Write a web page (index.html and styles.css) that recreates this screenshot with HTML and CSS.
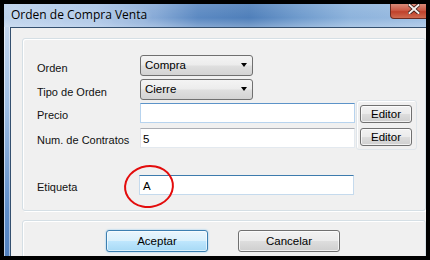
FILE: index.html
```html
<!DOCTYPE html>
<html lang="es">
<head>
    <meta charset="UTF-8">
    <title>Orden de Compra Venta</title>
    <link rel="stylesheet" href="styles.css">
</head>
<body>
    <div class="screen">
        <div class="window">
            <div class="titlebar">
                <span class="title">Orden de Compra Venta</span>
                <div class="close">
                    <svg width="12" height="10" viewBox="0 0 12 10">
                        <path d="M1.5 1 L10.5 9 M10.5 1 L1.5 9" stroke="#3a1a14" stroke-width="3.6" stroke-linecap="square"/>
                        <path d="M1.5 1 L10.5 9 M10.5 1 L1.5 9" stroke="#f4f0ee" stroke-width="2" stroke-linecap="square"/>
                    </svg>
                </div>
            </div>

            <div class="frame">
                <div class="frame_side"></div>
                <div class="client">

                    <div class="group fields">
                        <div class="row">
                            <label>Orden</label>
                            <div class="combo"><span>Compra</span><i class="arrow"></i></div>
                        </div>
                        <div class="row">
                            <label>Tipo de Orden</label>
                            <div class="combo"><span>Cierre</span><i class="arrow"></i></div>
                        </div>

                        <div class="edit_block">
                            <div class="edit_rows">
                                <div class="row row_edit">
                                    <label>Precio</label>
                                    <div class="input input_hover"></div>
                                </div>
                                <div class="row row_edit">
                                    <label>Num. de Contratos</label>
                                    <div class="input">5</div>
                                </div>
                            </div>
                            <div class="editor_box">
                                <button class="btn btn_small">Editor</button>
                                <button class="btn btn_small">Editor</button>
                            </div>
                        </div>

                        <div class="row row_tag">
                            <label>Etiqueta</label>
                            <div class="input input_focus">A<span class="mark"></span></div>
                        </div>
                    </div>

                    <div class="group actions">
                        <button class="btn btn_wide btn_default">Aceptar</button>
                        <button class="btn btn_wide">Cancelar</button>
                    </div>

                </div>
            </div>
        </div>
    </div>
</body>
</html>
```

FILE: styles.css
```css
body{
    margin: 0;
    background: #000;
}

.screen{
    width: 430px;
    height: 260px;
    padding: 4px;
    box-sizing: border-box;
}

.window{
    height: 252px;
    display: flex;
    flex-direction: column;
    overflow: hidden;
    font-family: "Liberation Sans", Arial, sans-serif;
    font-size: 11px;
    color: #000;
}

/* barra de titulo estilo aero */
.titlebar{
    height: 23px;
    flex-shrink: 0;
    display: flex;
    align-items: flex-start;
    padding-left: 7px;
    background:
        linear-gradient(180deg, rgba(255,255,255,0.10) 0%, rgba(255,255,255,0) 60%, rgba(255,255,255,0.25) 100%),
        linear-gradient(90deg, #bcd2ec 0%, #a9c4e6 22%, #86a9d6 36%, #5b89c2 46%, #4f7fba 58%, #6f9bcd 70%, #8db3dc 82%, #9cbde2 100%);
}

.title{
    font-family: "Open Sans", "Noto Sans", sans-serif;
    font-size: 12px;
    line-height: 16px;
    padding-top: 3px;
    color: #000;
    text-shadow: 0 0 6px rgba(255,255,255,0.7);
}

.close{
    flex-shrink: 0;
    margin-left: auto;
    margin-right: -7px;
    width: 43px;
    height: 15px;
    box-sizing: border-box;
    border: 1px solid #6b2a20;
    border-top: none;
    border-radius: 0 0 4px 4px;
    background: linear-gradient(180deg, #d98a78 0%, #cc5a45 45%, #c0412b 55%, #cf6a50 100%);
    display: flex;
    justify-content: center;
}

.close svg{
    display: block;
    margin-left: 4px;
}

.frame{
    flex: 1;
    display: flex;
}

.frame_side{
    width: 6px;
    flex-shrink: 0;
    background: linear-gradient(180deg, #c3d6ed 0%, #9ebde2 30%, #5d8cc8 70%, #4a78b6 100%);
    box-shadow: inset 1px 0 0 rgba(255,255,255,0.6), inset -1px 0 0 rgba(255,255,255,0.45);
}

.client{
    flex: 1;
    background: #f0f0f0;
    border-left: 1px solid #34506f;
    border-top: 1px solid #34506f;
    padding: 10px 0 0 11px;
}

/* group box */
.group{
    border: 1px solid #d5dfe5;
    border-radius: 3px;
    box-shadow: inset 1px 1px 0 #fff, 1px 1px 0 #fff;
}

.fields{
    padding: 16px 0 15px 14px;
}

.row{
    display: flex;
    align-items: flex-start;
    height: 24px;
}

.row label{
    width: 103px;
    flex-shrink: 0;
    line-height: 13px;
    padding-top: 7px;
    color: #111;
}

.combo{
    width: 113px;
    height: 21px;
    box-sizing: border-box;
    border: 1px solid #707070;
    border-radius: 3px;
    background: linear-gradient(180deg, #f4f4f4 0%, #ececec 48%, #dfdfdf 52%, #d3d3d3 100%);
    display: flex;
    align-items: center;
    padding: 0 5px 1px 4px;
    font-size: 11.5px;
}

.arrow{
    margin-left: auto;
    width: 0;
    height: 0;
    border-left: 3.5px solid transparent;
    border-right: 3.5px solid transparent;
    border-top: 4px solid #000;
}

.edit_block{
    display: flex;
    align-items: flex-start;
    height: 47px;
}

.row_edit{
    height: 25px;
}

.row_edit label{
    padding-top: 6px;
}

.input{
    width: 215px;
    height: 20px;
    box-sizing: border-box;
    background: #fff;
    border: 1px solid #e3e9ef;
    border-top-color: #abadb3;
    border-left-color: #e2e3ea;
    padding: 3px 2px 0 2px;
    font-size: 11.5px;
    line-height: 14px;
}

.input_hover{
    border-color: #b7d3ee;
    border-top-color: #5c93c8;
}

.input_focus{
    position: relative;
    margin-left: -1px;
    border-color: #c5daed;
    border-top-color: #3d7bad;
    padding-left: 3px;
}

.editor_box{
    margin-top: -3px;
    margin-left: 1px;
    width: 61px;
    height: 50px;
    box-sizing: border-box;
    border: 1px solid #dfe5ea;
    border-radius: 3px;
    box-shadow: inset 1px 1px 0 #fff;
    padding: 4px 0 0 3px;
    display: flex;
    flex-direction: column;
    gap: 5px;
}

.row_tag{
    margin-top: 25px;
    height: 20px;
}

.row_tag label{
    padding-top: 6px;
}

/* marca roja alrededor de la A */
.mark{
    position: absolute;
    left: -16px;
    top: -11px;
    width: 50px;
    height: 43px;
    box-sizing: border-box;
    border: 2.5px solid #e30c0c;
    border-radius: 50%;
    transform: rotate(-8deg);
}

.btn{
    font-family: "Liberation Sans", Arial, sans-serif;
    font-size: 11.5px;
    color: #000;
    border: 1px solid #707070;
    border-radius: 3px;
    background: linear-gradient(180deg, #f2f2f2 0%, #ebebeb 48%, #dddddd 52%, #cfcfcf 100%);
    box-shadow: inset 0 0 0 1px rgba(255,255,255,0.7);
    padding: 0;
}

.btn_small{
    width: 52px;
    height: 18px;
}

.actions{
    margin-top: 9px;
    height: 60px;
    display: flex;
    justify-content: center;
    align-items: flex-start;
    gap: 30px;
    padding-top: 9px;
    padding-right: 2px;
}

.btn_wide{
    width: 102px;
    height: 22px;
}

.btn_default{
    border-color: #3c7fb1;
    background: linear-gradient(180deg, #eaf6fd 0%, #d9f0fc 48%, #bee6fd 52%, #a7d9f5 100%);
    box-shadow: inset 0 0 0 1px rgba(255,255,255,0.6), 0 0 2px #7fc3ee;
}
```
